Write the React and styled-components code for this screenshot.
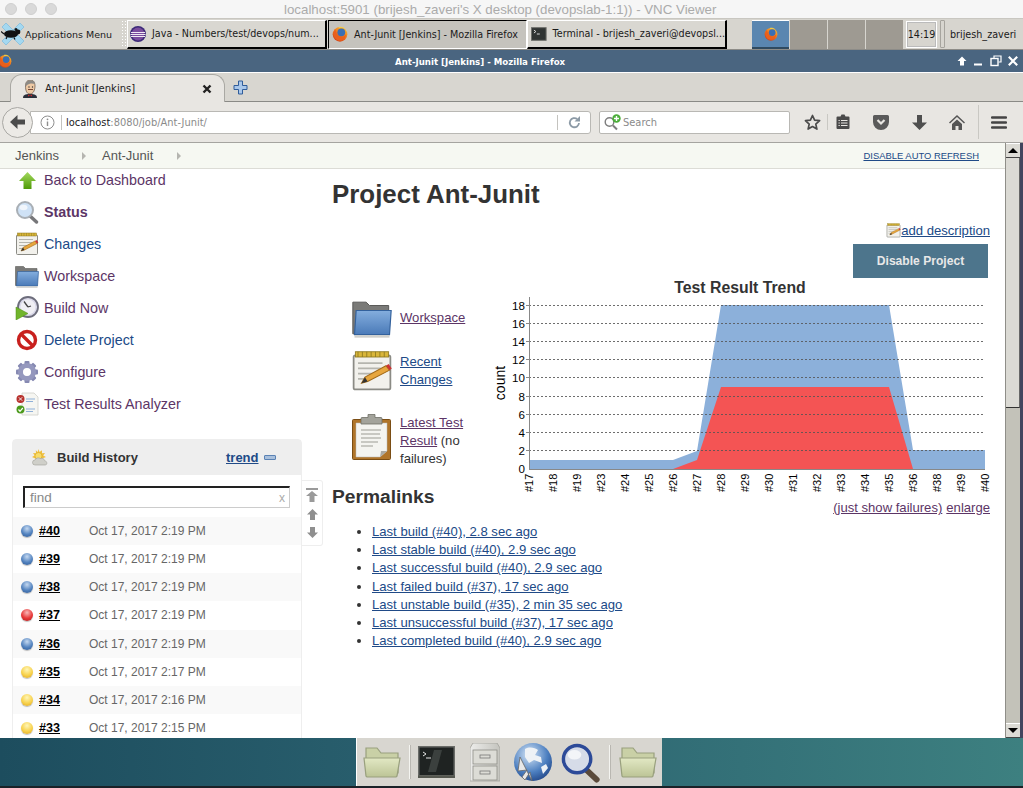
import React from 'react';
import styled, { createGlobalStyle } from 'styled-components';

const Global = createGlobalStyle`
    html, body { margin: 0; padding: 0; background: #fff; }
    * { box-sizing: border-box; }
`

const Root = styled.div`
    width: 1023px;
    height: 788px;
    display: flex;
    flex-direction: column;
    overflow: hidden;
    font-family: "Liberation Sans", Arial, sans-serif;
    background: #fff;
`

/* mac window title */
const MacBar = styled.div`
    height: 18px;
    flex: none;
    display: grid;
    grid-template-columns: 279px auto 1fr;
    align-items: center;
    background: #f6f6f6;
    padding-left: 5px;
`
const Lights = styled.div`
    display: flex;
    gap: 8px;
`
const Light = styled.span`
    width: 12px;
    height: 12px;
    border-radius: 50%;
    background: #d9d9d9;
    border: 1px solid #cfcfcf;
`
const MacTitle = styled.div`
    font-size: 13.3px;
    color: #ababab;
    white-space: nowrap;
`

/* xfce panel */
const Panel = styled.div`
    height: 32px;
    flex: none;
    display: flex;
    align-items: center;
    background: #d7d5cf;
    border-top: 1px solid #c9c7c1;
    border-bottom: 1px solid #8d8c88;
    font-family: "DejaVu Sans", sans-serif;
    font-size: 9.6px;
    color: #1a1a1a;
`
const AppMenu = styled.div`
    width: 121px;
    display: flex;
    align-items: center;
    gap: 0;
    padding-left: 1px;
    font-size: 9.5px;
    white-space: nowrap;
`
const Handle = styled.div`
    width: 6px;
    height: 28px;
    margin-right: 0;
    background-image: radial-gradient(#fff 0.8px, transparent 1px);
    background-size: 3px 3px;
`
const Task = styled.div`
    width: ${p => p.$w}px;
    height: 29px;
    display: flex;
    align-items: center;
    gap: 6px;
    padding-left: ${p => p.$pad || 3}px;
    white-space: nowrap;
    overflow: hidden;
    background: ${p => (p.$active ? '#c5c3bd' : '#d9d7d1')};
    border: 1px solid;
    border-color: ${p => (p.$active ? '#000 #fff #fff #000' : '#fff #000 #000 #fff')};
    border-bottom-width: ${p => (p.$active ? 1 : 2)}px;
    border-right-width: ${p => (p.$active ? 1 : 2)}px;
    margin-right: ${p => p.$mr || 0}px;
`
const Desk = styled.div`
    width: ${p => p.$w || 37}px;
    height: 29px;
    margin-right: 1px;
    display: flex;
    align-items: center;
    justify-content: center;
    background: ${p => (p.$active ? '#5a86b0' : '#9e9a92')};
    border-bottom: ${p => (p.$active ? '2px solid #2f4a60' : 'none')};
    border-top: ${p => (p.$active ? '1px solid #fff' : 'none')};
`
const Clock = styled.div`
    width: 31px;
    height: 27px;
    margin: 0 3px 0 2px;
    display: flex;
    align-items: center;
    justify-content: center;
    border: 1px solid #fff;
    outline: 1px solid #bbb;
    outline-offset: -2px;
`
const Grip = styled.div`
    width: 5px;
    height: 28px;
    margin-right: 5px;
    border: 1px solid #a6a49e;
    border-radius: 1px;
`

/* firefox window */
const TitleBar = styled.div`
    height: 23px;
    flex: none;
    display: grid;
    grid-template-columns: 395px auto 1fr;
    align-items: center;
    background: #4a6580;
    border-bottom: 1px solid #fff;
    color: #fff;
    font-family: "DejaVu Sans", sans-serif;
    font-weight: bold;
    font-size: 8.65px;
`
const TitleLeft = styled.div`
    margin-left: -2px;
    display: flex;
`
const TitleText = styled.span`
    margin-top: 2px;
    white-space: nowrap;
`
const TitleBtns = styled.div`
    justify-self: end;
    display: flex;
    gap: 5px;
    padding-right: 4px;
`
const TabBar = styled.div`
    height: 29px;
    flex: none;
    display: flex;
    align-items: flex-end;
    background: #d8d6d0;
    border-bottom: 1px solid #8a8a86;
    padding-left: 10px;
`
const Tab = styled.div`
    width: 215px;
    height: 28px;
    margin-bottom: -1px;
    display: flex;
    align-items: center;
    padding: 0 12px 0 11px;
    gap: 7px;
    background: #e8e6e2;
    border: 1px solid #a9a8a3;
    border-bottom: none;
    border-radius: 12px 12px 0 0;
    font-family: "DejaVu Sans", sans-serif;
    font-size: 10px;
    color: #222;
`
const TabText = styled.span`
    flex: 1;
`
const NewTab = styled.div`
    margin: 0 0 6px 8px;
    display: flex;
`
const NavBar = styled.div`
    height: 41px;
    flex: none;
    display: flex;
    align-items: center;
    background: #e8e6e2;
    border-bottom: 1px solid #a5a4a0;
`
const BackBtn = styled.div`
    width: 31px;
    height: 31px;
    margin-left: 2px;
    margin-right: -3px;
    position: relative;
    z-index: 1;
    display: flex;
    align-items: center;
    justify-content: center;
    border-radius: 50%;
    background: #eceae6;
    border: 1px solid #a9a8a4;
`
const UrlBar = styled.div`
    width: 561px;
    height: 23px;
    display: flex;
    align-items: center;
    padding-left: 9px;
    background: #fff;
    border: 1px solid #b9b8b4;
    border-radius: 0 3px 3px 0;
    font-family: "DejaVu Sans", sans-serif;
    font-size: 9.9px;
    color: #8a8a8a;
`
const UrlHost = styled.span`
    color: #222;
`
const BarSep = styled.span`
    width: 1px;
    height: 15px;
    flex: none;
    background: #c4c3bf;
    margin: ${p => p.$m};
`
const Search = styled.div`
    width: 191px;
    height: 23px;
    margin-left: 8px;
    display: flex;
    align-items: center;
    gap: 1px;
    padding-left: 3px;
    background: #fff;
    border: 1px solid #b9b8b4;
    border-radius: 2px;
    font-family: "DejaVu Sans", sans-serif;
    font-size: 9.9px;
    color: #8a8a8a;
`
const Slot = styled.div`
    width: ${p => p.$w}px;
    padding-left: ${p => p.$pad || 0}px;
    display: flex;
    justify-content: center;
    flex: none;
`
const ToolSep = styled.div`
    width: 1px;
    height: ${p => p.$h}px;
    flex: none;
    background: #c9c8c3;
`

/* page */
const PageRow = styled.div`
    height: 595px;
    flex: none;
    display: flex;
`
const Page = styled.div`
    width: 1005px;
    flex: none;
    display: flex;
    flex-direction: column;
    background: #fff;
`
const Crumbs = styled.div`
    height: 26px;
    flex: none;
    display: flex;
    align-items: center;
    padding: 0 26px 0 15px;
    background: #f6f8f2;
    border-bottom: 1px solid #dcdcd6;
    font-size: 13px;
    color: #555;
    position: relative;
    z-index: 1;
`
const Crumb = styled.span`
    width: ${p => p.$w}px;
    flex: none;
    display: flex;
    align-items: center;
    justify-content: space-between;
    padding-right: ${p => p.$pad}px;
`
const CrumbArrow = styled.span`
    width: 0;
    height: 0;
    border-left: 4px solid #b5b5b0;
    border-top: 4px solid transparent;
    border-bottom: 4px solid transparent;
`
const AutoRefresh = styled.a`
    margin-left: auto;
    font-size: 9.43px;
    color: #204a87;
    text-decoration: underline;
`
const Body = styled.div`
    flex: 1;
    min-height: 0;
    display: flex;
    overflow: hidden;
`
const Sidebar = styled.div`
    width: 332px;
    flex: none;
    margin-top: -5px;
`
const Tasks = styled.div`
    display: flex;
    flex-direction: column;
`
const TaskRow = styled.div`
    height: 32px;
    display: flex;
    align-items: center;
    padding-left: 15px;
    gap: 5px;
    font-size: 14.3px;
    font-weight: ${p => (p.$bold ? 'bold' : 'normal')};
    color: ${p => (p.$blue ? '#204a87' : '#5c3566')};
`
const IconBox = styled.span`
    width: 24px;
    height: 24px;
    flex: none;
    display: flex;
    align-items: center;
    justify-content: center;
`
const HistoryWrap = styled.div`
    display: flex;
    margin: 19px 0 0 12px;
`
const History = styled.div`
    width: 290px;
    flex: none;
    border: 1px solid #eee;
    border-radius: 4px 4px 0 0;
`
const HistoryHead = styled.div`
    height: 35px;
    display: flex;
    align-items: center;
    padding-left: 15px;
    background: #eee;
    font-size: 13px;
    font-weight: bold;
    color: #333;
`
const HeadTitle = styled.span`
    width: 169px;
    margin-left: 5px;
`
const Trend = styled.a`
    color: #204a87;
    text-decoration: underline;
`
const Minus = styled.span`
    width: 12px;
    height: 5px;
    margin-left: 5px;
    background: #a9c0dc;
    border: 1px solid #5a82b4;
    border-radius: 1px;
`
const FindBox = styled.div`
    height: 22px;
    margin: 11px 11px 9px 10px;
    display: flex;
    align-items: center;
    justify-content: space-between;
    padding: 0 4px 0 5px;
    border: 1px solid #ccc;
    border-top: 2px solid #222;
    border-left: 2px solid #222;
    font-size: 13.5px;
    color: #888;
`
const FindX = styled.span`
    font-size: 12px;
    color: #aaa;
`
const BuildRow = styled.div`
    height: 28.14px;
    display: flex;
    align-items: center;
    padding-left: 8px;
    background: ${p => (p.$odd ? '#f9f9f9' : '#fff')};
`
const Ball = styled.span`
    width: 12px;
    height: 12px;
    flex: none;
    border-radius: 50%;
    box-shadow: 0 1px 1px rgba(0, 0, 0, 0.25);
    background: radial-gradient(circle at 50% 30%, ${p => p.$light} 0, ${p => p.$color} 55%, ${p => p.$dark} 100%);
`
const BuildNo = styled.a`
    width: 50px;
    margin-left: 6px;
    flex: none;
    font-size: 12.6px;
    font-weight: bold;
    color: #000;
    text-decoration: underline;
`
const BuildDate = styled.span`
    font-size: 12px;
    color: #666;
`
const Pager = styled.div`
    width: 21px;
    height: 66px;
    margin-top: 41px;
    display: flex;
    flex-direction: column;
    align-items: center;
    justify-content: space-around;
    padding: 3px 0;
    border: 1px solid #eee;
    border-left: none;
    border-radius: 0 3px 3px 0;
`
const Main = styled.div`
    flex: 1;
    min-width: 0;
    padding-right: 15px;
    font-size: 13.1px;
    color: #333;
`
const Title = styled.h1`
    margin: 10px 0 0;
    font-size: 25.9px;
    line-height: 30px;
    font-weight: bold;
    color: #333;
`
const DescRow = styled.div`
    height: 16px;
    margin-top: 13px;
    display: flex;
    justify-content: flex-end;
    align-items: center;
`
const DisableBtn = styled.button`
    display: block;
    width: 135px;
    height: 34px;
    margin: 6px 2px 0 auto;
    background: #4d758c;
    border: none;
    color: #e8e8e8;
    font-family: inherit;
    font-size: 12.1px;
    font-weight: bold;
`
const Split = styled.div`
    display: flex;
    height: 238px;
`
const LeftCol = styled.div`
    width: 158px;
    flex: none;
    padding-top: 20px;
`
const Item = styled.div`
    display: flex;
    align-items: ${p => p.$align || 'center'};
    gap: 7px;
    padding-left: 19px;
    margin-bottom: ${p => p.$mb}px;
    height: ${p => p.$h}px;
    line-height: 18px;
`
const Link = styled.a`
    color: ${p => (p.$visited ? '#5c3566' : '#204a87')};
    text-decoration: underline;
    white-space: nowrap;
`
const ItemIcon = styled.span`
    width: 42px;
    flex: none;
    display: flex;
`
const Permalinks = styled.h2`
    margin: 17px 0 0;
    font-size: 19.2px;
    line-height: 24px;
    font-weight: bold;
    color: #333;
    white-space: nowrap;
`
const ChartCol = styled.div`
    width: 500px;
    flex: none;
`
const ChartSvg = styled.svg`
    display: block;
`
const ChartLinks = styled.div`
    margin-top: 2px;
    display: flex;
    justify-content: flex-end;
    gap: 4px;
    line-height: 18px;
`
const PermaList = styled.ul`
    margin: 7px 0 0;
    padding: 0 0 0 40px;
    line-height: 18.2px;
`
const Scrollbar = styled.div`
    width: 15px;
    flex: none;
    display: flex;
    flex-direction: column;
    background: #c3c2b9;
    border-left: 1px solid #8f8e88;
`
const ScrollBtn = styled.div`
    height: 15px;
    flex: none;
    display: flex;
    align-items: center;
    justify-content: center;
    background: #dcdbd5;
    border-bottom: 1px solid #444;
    border-top: 1px solid #fff;
`
const ScrollThumb = styled.div`
    height: 250px;
    flex: none;
    background: #dbdad4;
    border-bottom: 1px solid #333;
    border-right: 1px solid #666;
`
const ScrollTrack = styled.div`
    flex: 1;
`
const Arrow = styled.span`
    width: 0;
    height: 0;
    border-left: 5px solid transparent;
    border-right: 5px solid transparent;
    border-${p => (p.$down ? 'top' : 'bottom')}: 5px solid #000;
`
const WindowEdge = styled.div`
    flex: 1;
    background: #41455e;
`

/* desktop */
const Desktop = styled.div`
    flex: 1;
    display: flex;
    justify-content: center;
    padding-right: 5px;
    background: linear-gradient(90deg, #1d4d5e 0%, #2b6270 45%, #3d8080 100%);
    border-bottom: 2px solid #1a2228;
`
const Dock = styled.div`
    width: 306px;
    margin-left: -1px;
    display: flex;
    align-items: center;
    padding-left: 6px;
    background: #d8d6d0;
    border-left: 1px solid #fff;
`
const DockSep = styled.div`
    width: 1px;
    height: 34px;
    flex: none;
    background: #f4f4f0;
    box-shadow: 1px 0 0 #b9b7b1;
    margin: 0 ${p => p.$r}px 0 ${p => p.$l}px;
`
const DockSlot = styled.div`
    flex: none;
    display: flex;
    margin-right: ${p => p.$mr || 0}px;
`

/* ---- icons ---- */
const Firefox = ({ size = 16 }) => (
    <svg width={size} height={size} viewBox="0 0 24 24">
        <defs>
            <linearGradient id="ffo" x1="0.8" y1="0" x2="0.2" y2="1">
                <stop offset="0" stopColor="#f9c22e" />
                <stop offset="0.5" stopColor="#f0721c" />
                <stop offset="1" stopColor="#c93a18" />
            </linearGradient>
        </defs>
        <circle cx="12" cy="12.500" r="11" fill="url(#ffo)" />
        <circle cx="14" cy="9.500" r="5.800" fill="#3a6fb4" />
        <path d="M4.500 5c2 3 1.500 9 6.500 11.500 4 1.500 8-.5 10-4-.5 6-5 10-10 9.500-5-.5-8.500-5-8.500-10 .2-2.500 1-5 2-7z" fill="#ea5f1c" />
        <path d="M10 1.500c3-1 7 0 9.500 2.500-3-1.500-6-1.500-8-.5z" fill="#fbd13f" />
    </svg>
)

const Eclipse = () => (
    <svg width="16" height="16" viewBox="0 0 16 16">
        <circle cx="8" cy="8" r="8" fill="#3c2a78" />
        <circle cx="8" cy="8" r="6.500" fill="#7b4d9e" />
        <path d="M1 6.500h14M.5 8.500h15M1 10.500h14" stroke="#efe9f3" strokeWidth="1" />
    </svg>
)

const XfceMouse = () => (
    <svg width="24" height="24" viewBox="0 0 24 24">
        <path d="M1 5l4-4 7 7 7-7 4 4-7 7 7 7-4 4-7-7-7 7-4-4 7-7z" fill="#a4d8f0" stroke="#72b6dc" strokeWidth="0.600" />
        <ellipse cx="10" cy="12" rx="7" ry="3.800" fill="#111" />
        <circle cx="17" cy="10" r="2.400" fill="#111" />
        <circle cx="15" cy="7.500" r="1.500" fill="#111" />
        <path d="M3 12L0 9.500M6 15l-1 2M13 15.500l1 2" stroke="#111" strokeWidth="1.200" />
    </svg>
)

const TermSmall = () => (
    <svg width="16" height="14" viewBox="0 0 16 14">
        <rect x="0.500" y="0.500" width="15" height="13" fill="#303433" stroke="#6f706c" />
        <path d="M3 3l2 1.500L3 6M6 7h3" stroke="#ddd" strokeWidth="1" fill="none" />
    </svg>
)

const JenkinsHead = () => (
    <svg width="16" height="18" viewBox="0 0 16 18">
        <path d="M1 18c0-3 2-4 7-4s7 1 7 4z" fill="#2a2f3a" />
        <path d="M6 14.500l2 1 2-1v2l-2-1-2 1z" fill="#c9272b" />
        <path d="M3.500 6c0-4 2-6 5-6s4.500 2.500 4.500 6-1.500 8-5 8-4.500-4-4.500-8z" fill="#eec9a4" stroke="#5d4a3e" strokeWidth="0.700" />
        <path d="M3.500 7C3 3 5 .3 8.500.3 11 .3 13 2 13 4 10 3 7 3.500 5 5z" fill="#8c8a86" />
        <path d="M6 9.500h5" stroke="#7a4a38" strokeWidth="1" />
        <circle cx="7" cy="7" r="0.700" fill="#333" />
        <circle cx="10.500" cy="7" r="0.700" fill="#333" />
    </svg>
)

const Close = ({ size = 10, color = '#222', w = 2.4 }) => (
    <svg width={size} height={size} viewBox="0 0 10 10">
        <path d="M1.500 1.500l7 7M8.500 1.500l-7 7" stroke={color} strokeWidth={w} />
    </svg>
)

const PlusTab = () => (
    <svg width="15" height="15" viewBox="0 0 15 15">
        <path d="M5.500 1h4v4.500H14v4H9.500V14h-4V9.500H1v-4h4.500z" fill="#a9c7ea" stroke="#2f5c9a" strokeWidth="1" />
    </svg>
)

const WinUp = () => (
    <svg width="12" height="12" viewBox="0 0 12 12"><path d="M6 1.500L10.500 6H8v4.500H4V6H1.500z" fill="#fff" /></svg>
)
const WinMin = () => (
    <svg width="12" height="12" viewBox="0 0 12 12"><rect x="1" y="8.500" width="8" height="2" fill="#fff" /></svg>
)
const WinMax = () => (
    <svg width="12" height="12" viewBox="0 0 12 12">
        <path d="M4 3V1h7v6H8.500" stroke="#fff" strokeWidth="1.200" fill="none" />
        <rect x="1" y="3.500" width="7" height="7" stroke="#fff" strokeWidth="1.400" fill="none" />
    </svg>
)

const BackArrow = () => (
    <svg width="16" height="14" viewBox="0 0 16 14"><path d="M7.500 0L0 7l7.500 7V9.500H15v-5H7.500z" fill="#4c4c4c" /></svg>
)
const Info = () => (
    <svg width="15" height="15" viewBox="0 0 15 15">
        <circle cx="7.500" cy="7.500" r="6.500" fill="none" stroke="#8e8e8e" strokeWidth="1" />
        <path d="M7.500 6.500v4.500" stroke="#8e8e8e" strokeWidth="1.400" />
        <circle cx="7.500" cy="4.300" r="0.900" fill="#8e8e8e" />
    </svg>
)
const Reload = () => (
    <svg width="13" height="13" viewBox="0 0 13 13">
        <path d="M11 7a4.600 4.600 0 1 1-1.800-4" fill="none" stroke="#8c9aa6" strokeWidth="1.800" />
        <path d="M12 0v5.500H6.500z" fill="#8c9aa6" />
    </svg>
)
const SearchGlass = () => (
    <svg width="19" height="17" viewBox="0 0 19 17">
        <circle cx="6.500" cy="8" r="4.300" fill="none" stroke="#7e7e7e" strokeWidth="1.400" />
        <path d="M10 11.500l4 4" stroke="#7e7e7e" strokeWidth="2" />
        <circle cx="13.500" cy="4.500" r="4.200" fill="#4cae3a" />
        <path d="M13.500 2v5M11 4.500h5" stroke="#fff" strokeWidth="1.400" />
    </svg>
)
const Star = () => (
    <svg width="17" height="17" viewBox="0 0 17 17">
        <path d="M8.500 1.500l2.100 4.700 5 .5-3.800 3.400 1.100 5-4.400-2.600-4.400 2.600 1.100-5L1.400 6.700l5-.5z" fill="none" stroke="#4a4a4a" strokeWidth="1.700" strokeLinejoin="round" />
    </svg>
)
const ClipList = () => (
    <svg width="14" height="16" viewBox="0 0 14 16">
        <path d="M1.500 2.500h3l1-2h3l1 2h3a1 1 0 0 1 1 1V14a1 1 0 0 1-1 1h-11a1 1 0 0 1-1-1V3.500a1 1 0 0 1 1-1z" fill="#4a4a4a" />
        <path d="M5 6.500h6.500M5 9h6.500M5 11.500h6.500M2.500 6.500h1.300M2.500 9h1.300M2.500 11.500h1.300" stroke="#e8e6e2" strokeWidth="1" />
    </svg>
)
const Pocket = () => (
    <svg width="16" height="15" viewBox="0 0 16 15">
        <path d="M1.500 0h13A1.500 1.500 0 0 1 16 1.500V7a8 8 0 0 1-16 0V1.500A1.500 1.500 0 0 1 1.500 0z" fill="#5a5a5a" />
        <path d="M4.500 5L8 8.500 11.500 5" fill="none" stroke="#e8e6e2" strokeWidth="2.200" />
    </svg>
)
const DownArrow = () => (
    <svg width="15" height="15" viewBox="0 0 15 15"><path d="M5 0h5v7.500h5L7.500 15 0 7.500h5z" fill="#4f4f4f" /></svg>
)
const Home = () => (
    <svg width="16" height="15" viewBox="0 0 16 15">
        <path d="M8 0L0 7.500l1 1L8 2l7 6.500 1-1z" fill="#555" />
        <path d="M3 9l5-4.500L13 9v6H9.500v-4h-3v4H3z" fill="#555" />
    </svg>
)
const Burger = () => (
    <svg width="16" height="13" viewBox="0 0 16 13">
        <path d="M1 1.500h14M1 6.500h14M1 11.500h14" stroke="#444" strokeWidth="2.400" strokeLinecap="round" />
    </svg>
)

const GreenUp = () => (
    <svg width="19" height="19" viewBox="0 0 19 19">
        <defs>
            <linearGradient id="gup" x1="0" y1="0" x2="0" y2="1">
                <stop offset="0" stopColor="#a4d95f" />
                <stop offset="1" stopColor="#4e9a06" />
            </linearGradient>
        </defs>
        <path d="M9.500 1L18 10h-4.500v8h-8v-8H1z" fill="url(#gup)" />
    </svg>
)
const Magnifier = ({ size = 24, ring = '#a9afb5', glass = '#cfe2f6', handle = '#77777a' }) => (
    <svg width={size} height={size} viewBox="0 0 24 24">
        <path d="M14.500 15.500l7 6.500" stroke={handle} strokeWidth="3.400" strokeLinecap="round" />
        <circle cx="10" cy="10" r="8" fill={glass} stroke={ring} strokeWidth="2" />
        <ellipse cx="8.500" cy="7.500" rx="4" ry="2.800" fill="#fff" opacity="0.700" />
    </svg>
)
const Notepad = ({ size = 24 }) => (
    <svg width={size} height={size} viewBox="0 0 24 24">
        <rect x="1.500" y="3" width="21" height="19.500" rx="1" fill="#f2f1ec" stroke="#8b8b85" strokeWidth="1" />
        <rect x="2.500" y="1" width="19" height="3" fill="#d9b63a" stroke="#8f7a20" strokeWidth="0.500" />
        <path d="M4 1v3M6.500 1v3M9 1v3M11.500 1v3M14 1v3M16.500 1v3M19 1v3" stroke="#8f7a20" strokeWidth="0.500" />
        <path d="M4 7.500h14M4 10.500h13M4 13.500h9M4 16.500h6" stroke="#b5b5ae" strokeWidth="1" />
        <path d="M6 19l2-3.500L20 9l2 2.500L9.500 18z" fill="#e7a63d" stroke="#a26a18" strokeWidth="0.600" />
        <path d="M20 9l2 2.500 1.300-1L21.500 8z" fill="#cc3333" />
        <path d="M6 19l2-3.500 1.500 2.500z" fill="#333" />
    </svg>
)
const Folder = ({ w = 24, h = 24 }) => (
    <svg width={w} height={h} viewBox="0 0 24 24">
        <defs>
            <linearGradient id="fld" x1="0" y1="0" x2="0" y2="1">
                <stop offset="0" stopColor="#84aede" />
                <stop offset="1" stopColor="#4a7ab8" />
            </linearGradient>
        </defs>
        <path d="M0.500 2.500h8l2 2h11.500v17H0.500z" fill="#7a7a78" stroke="#5a5a58" strokeWidth="0.600" />
        <path d="M2.500 7.500h21l-1 14.500H1.500z" fill="url(#fld)" stroke="#33619c" strokeWidth="0.700" />
        <rect x="1.500" y="22.300" width="21" height="1.500" fill="#cfcfcc" />
    </svg>
)
const BuildNowIcon = () => (
    <svg width="24" height="24" viewBox="0 0 24 24">
        <circle cx="13" cy="11" r="10" fill="#d9d8e8" stroke="#6d6d7c" strokeWidth="1.800" />
        <circle cx="13" cy="11" r="7.500" fill="#f0eff4" />
        <path d="M13 11L9 5.500M13 11l3-1" stroke="#444" strokeWidth="1.300" />
        <path d="M1 11l12 6.500L1 24z" fill="#71b52c" stroke="#4c8a14" strokeWidth="0.500" />
    </svg>
)
const NoEntry = () => (
    <svg width="22" height="22" viewBox="0 0 22 22">
        <circle cx="11" cy="11" r="8.500" fill="#fff" stroke="#c8201e" strokeWidth="3.400" />
        <path d="M5 5l12 12" stroke="#c8201e" strokeWidth="3.400" />
    </svg>
)
const Gear = () => (
    <svg width="24" height="24" viewBox="0 0 24 24">
        {[0, 45, 90, 135, 180, 225, 270, 315].map(a => (
            <rect key={a} x="9.500" y="1" width="5" height="6" rx="1" fill="#8689b2" transform={`rotate(${a} 12 12)`} />
        ))}
        <circle cx="12" cy="12" r="6.500" fill="none" stroke="#9598be" strokeWidth="5" />
        <circle cx="12" cy="12" r="3.500" fill="#fff" />
    </svg>
)
const ReportIcon = () => (
    <svg width="24" height="24" viewBox="0 0 24 24">
        <path d="M7 1h12l4 4v18H7z" fill="#f6f6f2" stroke="#cfcfc9" strokeWidth="0.800" />
        <path d="M11 7h9M11 9.500h7M11 17h9M11 19.500h7" stroke="#8fb0d8" strokeWidth="1" />
        <circle cx="5.500" cy="7" r="4" fill="#b8302c" />
        <path d="M3.800 5.300l3.400 3.400M7.200 5.300l-3.400 3.400" stroke="#eee" strokeWidth="1" />
        <circle cx="5.500" cy="17.500" r="4" fill="#4c9a1c" />
        <path d="M3.500 17.500l1.500 1.800 2.800-3.300" stroke="#fff" strokeWidth="1.200" fill="none" />
    </svg>
)
const Weather = () => (
    <svg width="18" height="18" viewBox="0 0 18 18">
        <path d="M7.500 0l1 3 2.500-1.800L11 4.200l3-.2-1.800 2.500L15 8 7.500 11 1 8l2.600-1.500L2 4l3 .2-.2-3 2 1.800z" fill="#f0c040" />
        <circle cx="7.500" cy="7" r="3.500" fill="#f8dc6a" stroke="#d9a520" strokeWidth="0.600" />
        <path d="M4 16a2.500 2.500 0 0 1 0-5c.7-2 3.500-2.800 5.500-1.500 1.500-.8 4 .2 4 2.200 2.500 0 3.500 4.300.5 4.300z" fill="#cfcfc9" stroke="#9f9f99" strokeWidth="0.600" />
    </svg>
)
const PagerTop = () => (
    <svg width="12" height="14" viewBox="0 0 12 14">
        <path d="M0 0h12v2H0zM6 3l6 5H8.500v6h-5V8H0z" fill="#9a9a9a" />
    </svg>
)
const PagerUp = () => (
    <svg width="11" height="11" viewBox="0 0 11 11"><path d="M5.500 0L11 5.500H8V11H3V5.500H0z" fill="#8f8f8f" /></svg>
)
const PagerDown = () => (
    <svg width="11" height="11" viewBox="0 0 11 11"><path d="M5.500 11L11 5.500H8V0H3v5.500H0z" fill="#8f8f8f" /></svg>
)
const Clipboard = () => (
    <svg width="42" height="49" viewBox="0 0 42 49">
        <rect x="1.500" y="5.500" width="38" height="40" rx="1" fill="#b0752a" stroke="#7a4d14" strokeWidth="1" />
        <path d="M5 9h31v28l-7 6H5z" fill="#f4f4f0" stroke="#bbb" strokeWidth="0.500" />
        <path d="M10 16h20M10 20h19M10 24h20M10 28h17M10 32h12" stroke="#b9b9b3" strokeWidth="1.400" />
        <path d="M29 43l7-6h-6z" fill="#a9a9a3" />
        <path d="M11 3.500h6V0.500h7v3h6a1 1 0 0 1 1 1V10H10V4.500a1 1 0 0 1 1-1z" fill="#a3a39b" stroke="#6e6e66" strokeWidth="0.800" />
    </svg>
)
const DockFolder = () => (
    <svg width="38" height="31" viewBox="0 0 38 31">
        <defs>
            <linearGradient id="dkf" x1="0" y1="0" x2="0" y2="1">
                <stop offset="0" stopColor="#e2e8c4" />
                <stop offset="1" stopColor="#bcc496" />
            </linearGradient>
        </defs>
        <path d="M3 1h11l4 5h17v20H3z" fill="#c9d0a6" stroke="#99a07e" strokeWidth="1.200" />
        <path d="M1 11h36l-3 18a1.500 1.500 0 0 1-1.500 1H4.500A1.500 1.500 0 0 1 3 29z" fill="url(#dkf)" stroke="#99a07e" strokeWidth="1.200" />
    </svg>
)
const DockTerminal = () => (
    <svg width="37" height="32" viewBox="0 0 37 32">
        <rect x="0.750" y="0.750" width="35.500" height="29" fill="#1f2322" stroke="#6a6c68" strokeWidth="1.500" />
        <path d="M16 4L10 26h8l6-22z" fill="#3b403e" />
        <path d="M5 6l3 2-3 2M8 12h5" stroke="#e4e4e4" strokeWidth="1" fill="none" />
        <rect x="0" y="29.500" width="37" height="2.500" fill="#55574f" />
    </svg>
)
const DockCabinet = () => (
    <svg width="30" height="39" viewBox="0 0 30 39">
        <defs>
            <linearGradient id="cab" x1="0" y1="0" x2="1" y2="0">
                <stop offset="0" stopColor="#ececea" />
                <stop offset="1" stopColor="#c4c4be" />
            </linearGradient>
        </defs>
        <path d="M3 0h24l3 5v33H0V5z" fill="url(#cab)" stroke="#a2a29c" strokeWidth="0.800" />
        <rect x="3" y="7" width="24" height="14" fill="#dcdcd6" stroke="#8e8e88" strokeWidth="0.800" />
        <rect x="3" y="23" width="24" height="14" fill="#dcdcd6" stroke="#8e8e88" strokeWidth="0.800" />
        <rect x="10" y="12" width="10" height="3" fill="none" stroke="#777" strokeWidth="0.800" />
        <rect x="10" y="28" width="10" height="3" fill="none" stroke="#777" strokeWidth="0.800" />
    </svg>
)
const DockGlobe = () => (
    <svg width="40" height="39" viewBox="0 0 40 39">
        <defs>
            <radialGradient id="glb" cx="0.4" cy="0.3" r="0.8">
                <stop offset="0" stopColor="#d6e6f6" />
                <stop offset="0.6" stopColor="#4c7fc0" />
                <stop offset="1" stopColor="#1c3f80" />
            </radialGradient>
        </defs>
        <circle cx="20" cy="19" r="19" fill="url(#glb)" />
        <path d="M12 6c5-3 10-1 13 1l-3 5 6 2 1 6-8-3-5 3-4-6zM28 24l5-3 2 4-5 6z" fill="#eef2f6" />
        <path d="M7 14l12 24-2-9-5 8-3-3 5-7-9 1z" fill="#e8e8e8" stroke="#666" strokeWidth="0.800" />
    </svg>
)

const Chart = () => {
    const x = i => 39 + i * 24
    const labels = ['17', '18', '19', '23', '24', '25', '26', '27', '28', '29', '30', '31', '32', '33', '34', '35', '36', '38', '39', '40']
    const ticks = [[18, 27], [16, 45], [14, 63], [12, 81], [10, 99], [8, 118], [6, 136], [4, 154], [2, 172]]
    return (
        <ChartSvg width="500" height="219" viewBox="0 0 500 219">
            <text x="250" y="14.500" textAnchor="middle" fontFamily="Liberation Sans" fontWeight="bold" fontSize="15.800" fill="#333">Test Result Trend</text>
            <polygon points={`39,182 ${x(6)},182 ${x(7)},173 ${x(8)},27 ${x(15)},27 ${x(16)},172 ${x(19)},172 ${x(19)},191 39,191`} fill="#8cb0da" />
            <polygon points={`${x(6)},191 ${x(7)},182 ${x(8)},109 ${x(15)},109 ${x(16)},191`} fill="#f45454" />
            {ticks.map(([v, y]) => (
                <g key={v}>
                    <line x1="39" x2="494" y1={y + 0.5} y2={y + 0.5} stroke="#555" strokeOpacity="0.85" strokeDasharray="2 2" />
                    <line x1="36" x2="39" y1={y + 0.5} y2={y + 0.5} stroke="#888" />
                    <text x="35" y={y + 4.500} textAnchor="end" fontFamily="Liberation Sans" fontSize="11.600" fill="#000">{v}</text>
                </g>
            ))}
            <text x="35" y="195" textAnchor="end" fontFamily="Liberation Sans" fontSize="11.600" fill="#000">0</text>
            <line x1="39.500" x2="39.500" y1="19" y2="191" stroke="#888" />
            <line x1="39" x2="495" y1="191.500" y2="191.500" stroke="#888" />
            <text transform="translate(15 105) rotate(-90)" textAnchor="middle" fontFamily="Liberation Sans" fontSize="14" fill="#000">count</text>
            {labels.map((l, i) => (
                <text key={l} transform={`translate(${x(i) + 4} 214) rotate(-90)`} fontFamily="Liberation Sans" fontSize="11" fill="#000">#{l}</text>
            ))}
        </ChartSvg>
    )
}

const blue = { $light: '#c4d8f0', $color: '#5484c0', $dark: '#2a5590' }
const red = { $light: '#f8b8b8', $color: '#e83838', $dark: '#a81c1c' }
const yellow = { $light: '#fff6b8', $color: '#f8d24c', $dark: '#d8a020' }

const builds = [
    ['#40', '2:19', blue],
    ['#39', '2:19', blue],
    ['#38', '2:19', blue],
    ['#37', '2:19', red],
    ['#36', '2:19', blue],
    ['#35', '2:17', yellow],
    ['#34', '2:16', yellow],
    ['#33', '2:15', yellow],
]

const permalinks = [
    'Last build (#40), 2.8 sec ago',
    'Last stable build (#40), 2.9 sec ago',
    'Last successful build (#40), 2.9 sec ago',
    'Last failed build (#37), 17 sec ago',
    'Last unstable build (#35), 2 min 35 sec ago',
    'Last unsuccessful build (#37), 17 sec ago',
    'Last completed build (#40), 2.9 sec ago',
]

class App extends React.Component {
    render() {
        return (
            <Root>
                <Global />
                <MacBar>
                    <Lights><Light /><Light /><Light /></Lights>
                    <MacTitle>localhost:5901 (brijesh_zaveri's X desktop (devopslab-1:1)) - VNC Viewer</MacTitle>
                    <span />
                </MacBar>
                <Panel>
                    <AppMenu><XfceMouse />Applications Menu</AppMenu>
                    <Handle />
                    <Task $w={200} $mr={1} $pad={2}><Eclipse />Java - Numbers/test/devops/num...</Task>
                    <Task $w={199} $active><Firefox />Ant-Junit [Jenkins] - Mozilla Firefox</Task>
                    <Task $w={200} $mr={25}><TermSmall />Terminal - brijesh_zaveri@devopsl...</Task>
                    <Desk $active><Firefox size={14} /></Desk>
                    <Desk />
                    <Desk />
                    <Desk />
                    <Clock>14:19</Clock>
                    <Grip />
                    <span>brijesh_zaveri</span>
                </Panel>
                <TitleBar>
                    <TitleLeft><Firefox size={14} /></TitleLeft>
                    <TitleText>Ant-Junit [Jenkins] - Mozilla Firefox</TitleText>
                    <TitleBtns>
                        <WinUp /><WinMin /><WinMax /><Close size={12} color="#fff" w={1.800} />
                    </TitleBtns>
                </TitleBar>
                <TabBar>
                    <Tab>
                        <JenkinsHead />
                        <TabText>Ant-Junit [Jenkins]</TabText>
                        <Close />
                    </Tab>
                    <NewTab><PlusTab /></NewTab>
                </TabBar>
                <NavBar>
                    <BackBtn><BackArrow /></BackBtn>
                    <UrlBar>
                        <Info />
                        <BarSep $m="0 4px 0 6px" />
                        <UrlHost>localhost</UrlHost>:8080/job/Ant-Junit/
                        <BarSep $m="0 0 0 auto" />
                        <Slot $w={32}><Reload /></Slot>
                    </UrlBar>
                    <Search><SearchGlass />Search</Search>
                    <Slot $w={37} $pad={7}><Star /></Slot>
                    <ToolSep $h={16} />
                    <Slot $w={30}><ClipList /></Slot>
                    <Slot $w={46}><Pocket /></Slot>
                    <Slot $w={31}><DownArrow /></Slot>
                    <Slot $w={43}><Home /></Slot>
                    <ToolSep $h={34} />
                    <Slot $w={40}><Burger /></Slot>
                </NavBar>
                <PageRow>
                    <Page>
                        <Crumbs>
                            <Crumb $w={87} $pad={16}>Jenkins<CrumbArrow /></Crumb>
                            <Crumb $w={79} $pad={0}>Ant-Junit<CrumbArrow /></Crumb>
                            <AutoRefresh>DISABLE AUTO REFRESH</AutoRefresh>
                        </Crumbs>
                        <Body>
                            <Sidebar>
                                <Tasks>
                                    <TaskRow><IconBox><GreenUp /></IconBox>Back to Dashboard</TaskRow>
                                    <TaskRow $bold><IconBox><Magnifier /></IconBox>Status</TaskRow>
                                    <TaskRow $blue><IconBox><Notepad /></IconBox>Changes</TaskRow>
                                    <TaskRow><IconBox><Folder /></IconBox>Workspace</TaskRow>
                                    <TaskRow><IconBox><BuildNowIcon /></IconBox>Build Now</TaskRow>
                                    <TaskRow $blue><IconBox><NoEntry /></IconBox>Delete Project</TaskRow>
                                    <TaskRow><IconBox><Gear /></IconBox>Configure</TaskRow>
                                    <TaskRow><IconBox><ReportIcon /></IconBox>Test Results Analyzer</TaskRow>
                                </Tasks>
                                <HistoryWrap>
                                    <History>
                                        <HistoryHead>
                                            <IconBox><Weather /></IconBox>
                                            <HeadTitle>Build History</HeadTitle>
                                            <Trend>trend</Trend>
                                            <Minus />
                                        </HistoryHead>
                                        <FindBox>find<FindX>x</FindX></FindBox>
                                        {builds.map(([no, time, ball], i) => (
                                            <BuildRow key={no} $odd={i % 2 === 0}>
                                                <Ball {...ball} />
                                                <BuildNo>{no}</BuildNo>
                                                <BuildDate>Oct 17, 2017 {time} PM</BuildDate>
                                            </BuildRow>
                                        ))}
                                    </History>
                                    <Pager><PagerTop /><PagerUp /><PagerDown /></Pager>
                                </HistoryWrap>
                            </Sidebar>
                            <Main>
                                <Title>Project Ant-Junit</Title>
                                <DescRow><Notepad size={15} /><Link>add description</Link></DescRow>
                                <DisableBtn>Disable Project</DisableBtn>
                                <Split>
                                    <LeftCol>
                                        <Item $h={40} $mb={11}>
                                            <ItemIcon><Folder w={42} h={40} /></ItemIcon>
                                            <Link $visited>Workspace</Link>
                                        </Item>
                                        <Item $h={44} $mb={21}>
                                            <ItemIcon><Notepad size={42} /></ItemIcon>
                                            <span><Link>Recent</Link><br /><Link>Changes</Link></span>
                                        </Item>
                                        <Item $h={54} $mb={0} $align="flex-start">
                                            <ItemIcon><Clipboard /></ItemIcon>
                                            <span><Link $visited>Latest Test</Link><br /><Link $visited>Result</Link> (no<br />failures)</span>
                                        </Item>
                                        <Permalinks>Permalinks</Permalinks>
                                    </LeftCol>
                                    <ChartCol>
                                        <Chart />
                                        <ChartLinks>
                                            <Link $visited>(just show failures)</Link>
                                            <Link $visited>enlarge</Link>
                                        </ChartLinks>
                                    </ChartCol>
                                </Split>
                                <PermaList>
                                    {permalinks.map(p => <li key={p}><Link>{p}</Link></li>)}
                                </PermaList>
                            </Main>
                        </Body>
                    </Page>
                    <Scrollbar>
                        <ScrollBtn><Arrow /></ScrollBtn>
                        <ScrollThumb />
                        <ScrollTrack />
                        <ScrollBtn><Arrow $down /></ScrollBtn>
                    </Scrollbar>
                    <WindowEdge />
                </PageRow>
                <Desktop>
                    <Dock>
                        <DockSlot><DockFolder /></DockSlot>
                        <DockSep $l={8} $r={8} />
                        <DockSlot $mr={15}><DockTerminal /></DockSlot>
                        <DockSlot $mr={13}><DockCabinet /></DockSlot>
                        <DockSlot $mr={7}><DockGlobe /></DockSlot>
                        <DockSlot><Magnifier size={41} ring="#2c4a98" glass="#d6dce8" handle="#5a4a3a" /></DockSlot>
                        <DockSep $l={8} $r={9} />
                        <DockSlot><DockFolder /></DockSlot>
                    </Dock>
                </Desktop>
            </Root>
        )
    }
}

export default App;
